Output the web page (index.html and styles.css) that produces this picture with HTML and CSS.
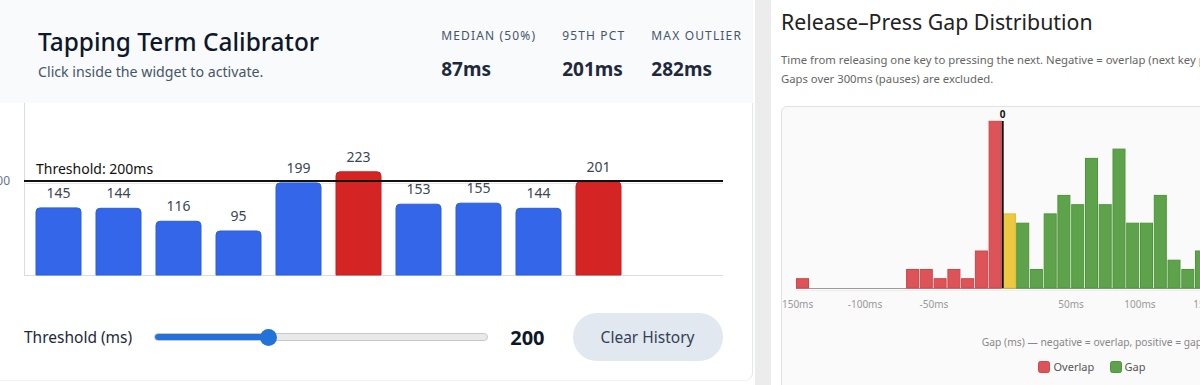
FILE: index.html
```html
<!DOCTYPE html>
<html lang="en">
<head>
<meta charset="utf-8">
<title>Tapping Term Calibrator</title>
<link rel="stylesheet" href="styles.css">
</head>
<body>
<div class="page">
  <section class="calib">
    <header class="calib-head">
      <div class="titles">
        <h1 class="calib-title">Tapping Term Calibrator</h1>
        <p class="calib-sub">Click inside the widget to activate.</p>
      </div>
      <div class="stats">
        <div class="stat"><div class="stat-label">Median (50%)</div><div class="stat-value">87ms</div></div>
        <div class="stat"><div class="stat-label">95th pct</div><div class="stat-value">201ms</div></div>
        <div class="stat"><div class="stat-label">Max outlier</div><div class="stat-value">282ms</div></div>
      </div>
    </header>
    <div class="calib-card">
      <svg class="bar-chart" width="752" height="187" viewBox="0 0 752 187">
        <line class="axis" x1="24.5" y1="0" x2="24.5" y2="172"/>
        <line class="axis" x1="24" y1="172.5" x2="723" y2="172.5"/>
        <line class="grid" x1="24" y1="80.5" x2="723" y2="80.5"/>
        <text class="tick" x="10" y="82" text-anchor="end">200</text>
        <path class="bar" d="M36,172V108.9Q36,104.9 40,104.9H77Q81,104.9 81,108.9V172Z"/>
        <path class="bar" d="M96,172V109.3Q96,105.3 100,105.3H137Q141,105.3 141,109.3V172Z"/>
        <path class="bar" d="M156,172V122.3Q156,118.3 160,118.3H197Q201,118.3 201,122.3V172Z"/>
        <path class="bar" d="M216,172V132Q216,128 220,128H257Q261,128 261,132V172Z"/>
        <path class="bar" d="M276,172V83.9Q276,79.9 280,79.9H317Q321,79.9 321,83.9V172Z"/>
        <path class="bar over" d="M336,172V72.8Q336,68.8 340,68.8H377Q381,68.8 381,72.8V172Z"/>
        <path class="bar" d="M396,172V105.2Q396,101.2 400,101.2H437Q441,101.2 441,105.2V172Z"/>
        <path class="bar" d="M456,172V104.2Q456,100.2 460,100.2H497Q501,100.2 501,104.2V172Z"/>
        <path class="bar" d="M516,172V109.3Q516,105.3 520,105.3H557Q561,105.3 561,109.3V172Z"/>
        <path class="bar over" d="M576,172V82.9Q576,78.9 580,78.9H617Q621,78.9 621,82.9V172Z"/>
        <text class="val" x="58.5" y="95">145</text>
        <text class="val" x="118.5" y="95.3">144</text>
        <text class="val" x="178.5" y="108.3">116</text>
        <text class="val" x="238.5" y="118">95</text>
        <text class="val" x="298.5" y="70">199</text>
        <text class="val" x="358.5" y="58.8">223</text>
        <text class="val" x="418.5" y="91.2">153</text>
        <text class="val" x="478.5" y="90.2">155</text>
        <text class="val" x="538.5" y="95.3">144</text>
        <text class="val" x="598.5" y="69">201</text>
        <line class="thr-line" x1="24" y1="78" x2="723" y2="78"/>
        <text class="thr-label" x="36" y="71">Threshold: 200ms</text>
      </svg>
      <div class="controls">
        <label class="ctl-label" for="thr">Threshold (ms)</label>
        <input type="range" id="thr" class="slider" min="50" max="500" value="200">
        <span class="ctl-value">200</span>
        <button class="clear-btn" type="button">Clear History</button>
      </div>
    </div>
  </section>
  <section class="gaps">
    <h2 class="gaps-title">Release–Press Gap Distribution</h2>
    <p class="gaps-desc"><span class="desc-line">Time from releasing one key to pressing the next. Negative = overlap (next key pressed before the previous one was released).</span><span class="desc-line">Gaps over 300ms (pauses) are excluded.</span></p>
    <div class="hist-card">
      <svg class="hist" width="640" height="290" viewBox="0 0 640 290">
        <g transform="translate(-1,-1)">
          <line class="h-base" x1="15" y1="182.5" x2="640" y2="182.5"/>
          <line class="h-sep" x1="15" y1="184.5" x2="640" y2="184.5"/>
          <rect class="h-ov" x="15.5" y="172.7" width="12" height="9.3"/>
          <rect class="h-ov" x="125.6" y="163.5" width="12" height="18.5"/>
          <rect class="h-ov" x="139.3" y="163.5" width="12" height="18.5"/>
          <rect class="h-ov" x="153.1" y="172.7" width="12" height="9.3"/>
          <rect class="h-ov" x="166.9" y="163.5" width="12" height="18.5"/>
          <rect class="h-ov" x="180.6" y="172.7" width="12" height="9.3"/>
          <rect class="h-ov" x="194.4" y="145" width="12" height="37"/>
          <rect class="h-ov" x="208.1" y="15.3" width="12" height="166.7"/>
          <rect class="h-zero" x="222.4" y="107.9" width="12" height="74.1"/>
          <rect class="h-gap" x="235.7" y="117.2" width="12" height="64.8"/>
          <rect class="h-gap" x="249.4" y="163.5" width="12" height="18.5"/>
          <rect class="h-gap" x="263.2" y="107.9" width="12" height="74.1"/>
          <rect class="h-gap" x="276.9" y="89.4" width="12" height="92.6"/>
          <rect class="h-gap" x="290.7" y="98.7" width="12" height="83.3"/>
          <rect class="h-gap" x="304.5" y="52.4" width="12" height="129.6"/>
          <rect class="h-gap" x="318.2" y="98.7" width="12" height="83.3"/>
          <rect class="h-gap" x="332" y="43.1" width="12" height="138.9"/>
          <rect class="h-gap" x="345.7" y="117.2" width="12" height="64.8"/>
          <rect class="h-gap" x="359.5" y="117.2" width="12" height="64.8"/>
          <rect class="h-gap" x="373.3" y="89.4" width="12" height="92.6"/>
          <rect class="h-gap" x="387" y="154.2" width="12" height="27.8"/>
          <rect class="h-gap" x="400.8" y="163.5" width="12" height="18.5"/>
          <rect class="h-gap" x="414.5" y="145" width="12" height="37"/>
          <rect class="h-gap" x="428.3" y="154.2" width="12" height="27.8"/>
          <rect class="h-gap" x="442.1" y="135.7" width="12" height="46.3"/>
          <line class="h-zline" x1="221.7" y1="15" x2="221.7" y2="182"/>
          <text class="h-zlab" x="221.7" y="11.5">0</text>
          <text class="h-tick" x="15" y="201.5">-150ms</text>
          <text class="h-tick" x="84" y="201.5">-100ms</text>
          <text class="h-tick" x="153" y="201.5">-50ms</text>
          <text class="h-tick" x="290" y="201.5">50ms</text>
          <text class="h-tick" x="359" y="201.5">100ms</text>
          <text class="h-tick" x="428" y="201.5">150ms</text>
          <text class="h-title" x="311" y="239.5">Gap (ms) — negative = overlap, positive = gap</text>
          <rect class="lg-ov" x="257.5" y="255.5" width="11" height="11" rx="2"/>
          <text class="lg-text" x="272.5" y="264.5">Overlap</text>
          <rect class="lg-gap" x="329.5" y="255.5" width="11" height="11" rx="2"/>
          <text class="lg-text" x="343.5" y="264.5">Gap</text>
        </g>
      </svg>
    </div>
  </section>
</div>
</body>
</html>
```
FILE: styles.css
```css
html, body {
  margin: 0;
  padding: 0;
}
body {
  width: 1200px;
  height: 385px;
  overflow: hidden;
  background: #ececec;
  font-family: "Noto Sans", "Open Sans", sans-serif;
}
.page {
  display: flex;
  gap: 16px;
  width: 1411px;
  height: 385px;
}
.calib {
  flex: none;
  width: 755px;
  background: #fff;
}
.calib-head {
  box-sizing: border-box;
  width: 753px;
  height: 103px;
  background: #f8fafc;
  display: flex;
  justify-content: space-between;
  padding: 0 11px 0 38px;
}
.titles {
  padding-top: 26px;
}
.calib-title {
  margin: 0;
  font-size: 24.4px;
  line-height: 32px;
  font-weight: 500;
  color: #0f172a;
}
.calib-sub {
  margin: 4px 0 0;
  font-size: 14.2px;
  line-height: 20px;
  color: #475569;
}
.stats {
  display: flex;
  gap: 26px;
  padding-top: 27px;
}
.stat-label {
  font-size: 12px;
  line-height: 18px;
  letter-spacing: 1.15px;
  text-transform: uppercase;
  color: #475569;
}
.stat-value {
  margin-top: 12px;
  font-size: 19px;
  line-height: 24px;
  font-weight: 700;
  color: #1e293b;
}
.calib-card {
  box-sizing: border-box;
  width: 753px;
  height: 278px;
  border-right: 1px solid #e3e8ef;
  border-bottom: 1px solid #eef1f5;
  border-bottom-right-radius: 8px;
}
.bar-chart {
  display: block;
}
.axis {
  stroke: #d7dde5;
  stroke-width: 1;
}
.grid {
  stroke: #e5e9ef;
  stroke-width: 1;
}
.tick {
  font-size: 12px;
  fill: #64748b;
}
.bar {
  fill: #3366e8;
  stroke: #2a5ce0;
  stroke-width: 1;
}
.bar.over {
  fill: #d42424;
  stroke: #c81e1e;
}
.val {
  font-size: 14px;
  fill: #3b4556;
  text-anchor: middle;
}
.thr-line {
  stroke: #111;
  stroke-width: 2;
}
.thr-label {
  font-size: 14px;
  fill: #111;
}
.controls {
  display: flex;
  align-items: center;
  padding: 23px 0 0 24px;
  height: 48px;
}
.ctl-label {
  font-size: 15.5px;
  color: #1e293b;
}
.slider {
  -webkit-appearance: none;
  appearance: none;
  box-sizing: border-box;
  width: 334px;
  height: 8px;
  margin: 0 0 0 22px;
  border-radius: 4px;
  border: 1px solid #c8c8c8;
  background: linear-gradient(to right, #2272d9 0, #2272d9 34%, #e9e9e9 34%, #e9e9e9 100%);
}
.slider::-webkit-slider-thumb {
  -webkit-appearance: none;
  appearance: none;
  width: 17px;
  height: 17px;
  border-radius: 50%;
  background: #2272d9;
  border: none;
}
.ctl-value {
  margin-left: 22px;
  font-size: 20px;
  font-weight: 700;
  color: #0f172a;
}
.clear-btn {
  margin-left: 28px;
  width: 150px;
  height: 48px;
  border: none;
  border-radius: 24px;
  background: #e2e8f0;
  color: #334155;
  font-family: "Noto Sans", "Open Sans", sans-serif;
  font-size: 15.5px;
}
.gaps {
  flex: none;
  width: 630px;
  background: #fff;
  padding-left: 10px;
}
.gaps-title {
  margin: 0;
  padding-top: 8px;
  font-size: 21.3px;
  line-height: 28px;
  font-weight: 400;
  color: #222;
}
.gaps-desc {
  margin: 14px 0 0;
  font-size: 11.3px;
  line-height: 19px;
  color: #666;
}
.desc-line {
  display: block;
  white-space: nowrap;
}
.hist-card {
  margin-top: 18px;
  width: 640px;
  height: 300px;
  box-sizing: border-box;
  border: 1px solid #e2e2e2;
  border-radius: 6px;
  background: #fafafa;
}
.hist {
  display: block;
}
.h-base {
  stroke: #9a9a9a;
  stroke-width: 1;
}
.h-sep {
  stroke: #ececec;
  stroke-width: 1;
}
.h-ov {
  fill: #dd5458;
  stroke: #d2444a;
  stroke-width: 1;
}
.h-zero {
  fill: #ecc940;
  stroke: #e2bb2c;
  stroke-width: 1;
}
.h-gap {
  fill: #5ea34b;
  stroke: #4c963a;
  stroke-width: 1;
}
.h-zline {
  stroke: #111;
  stroke-width: 2;
}
.h-zlab {
  font-size: 10px;
  font-weight: 700;
  fill: #111;
  text-anchor: middle;
}
.h-tick {
  font-size: 10px;
  fill: #999;
  text-anchor: middle;
}
.h-title {
  font-size: 10.3px;
  fill: #888;
  text-anchor: middle;
}
.lg-ov {
  fill: #dd5458;
  stroke: #d2444a;
}
.lg-gap {
  fill: #5ea34b;
  stroke: #4c963a;
}
.lg-text {
  font-size: 11px;
  fill: #555;
}
```
